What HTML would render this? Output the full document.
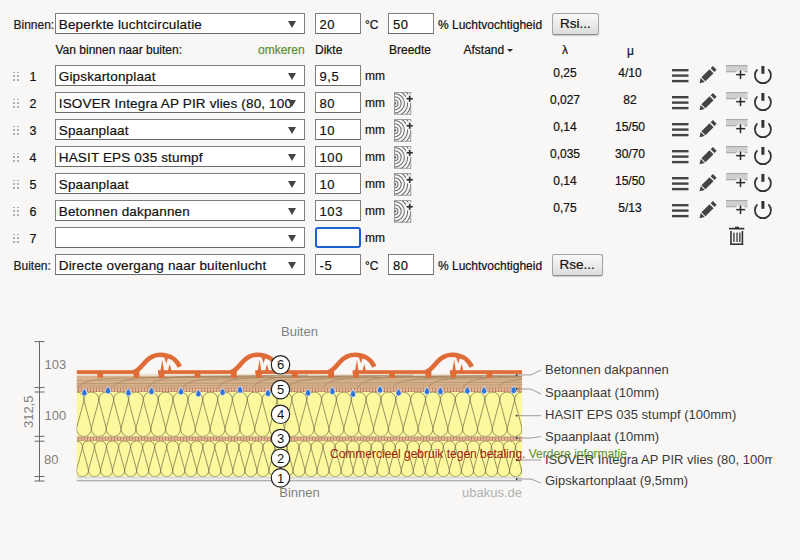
<!DOCTYPE html><html><head><meta charset="utf-8"><style>
*{box-sizing:border-box;margin:0;padding:0}
html,body{width:800px;height:560px;overflow:hidden;background:#f8f7f5;font-family:"Liberation Sans",sans-serif;color:#111;-webkit-text-stroke:0.2px currentColor}
.a{position:absolute;white-space:nowrap}
.t{font-size:12px;line-height:14px}
.sel{position:absolute;left:55px;width:250px;height:21px;background:#fff;border:1px solid #7e7e7e;border-bottom-color:#6a6a6a;font-size:13.5px;line-height:20px;padding-top:0.5px;padding-left:2.8px;letter-spacing:0.15px;overflow:hidden;white-space:nowrap}
.sel .ar{position:absolute;right:8px;top:6.5px;width:0;height:0;border-left:4px solid transparent;border-right:4px solid transparent;border-top:7px solid #444}
.inp{position:absolute;width:46px;height:21px;background:#fff;border:1px solid #7e7e7e;border-bottom-color:#6a6a6a;font-size:13px;line-height:21px;padding-left:4px;letter-spacing:0.6px}
.btn{position:absolute;width:46px;height:22px;border:1px solid #a4a4a4;border-bottom-color:#8c8c8c;border-radius:2.5px;background:linear-gradient(#f9f9f9,#dcdcdc);font-size:13.5px;line-height:20px;text-align:center;box-shadow:0 1px 1px rgba(0,0,0,.18)}
.grip{position:absolute;left:13px;width:6px;height:9px}
.grip i{position:absolute;width:1.8px;height:1.8px;background:#b0b0b0}
.num{position:absolute;left:29px;font-size:12.5px;line-height:14px}
</style></head><body><div class="a t" style="left:13.5px;top:18px;color:#1a1a1a">Binnen:</div>
<div class="sel" style="top:13px">Beperkte luchtcirculatie<span class="ar"></span></div>
<div class="inp" style="left:314.5px;top:13px">20</div>
<div class="a t" style="left:365px;top:17.5px;font-size:12px">°C</div>
<div class="inp" style="left:388px;top:13px">50</div>
<div class="a t" style="left:438px;top:17.5px">% Luchtvochtigheid</div>
<div class="btn" style="left:552px;top:13px;width:46.8px">Rsi...</div>
<div class="a t" style="left:55.5px;top:43px">Van binnen naar buiten:</div>
<div class="a t" style="left:258px;top:43px;color:#5a8f2e">omkeren</div>
<div class="a t" style="left:315px;top:43px">Dikte</div>
<div class="a t" style="left:389px;top:43px">Breedte</div>
<div class="a t" style="left:463.5px;top:43px">Afstand</div>
<div class="a" style="left:507.4px;top:49.4px;width:0;height:0;border-left:3.2px solid transparent;border-right:3.2px solid transparent;border-top:3.4px solid #222"></div>
<div class="a t" style="left:562px;top:43px">λ</div>
<div class="a t" style="left:627px;top:44px">μ</div>
<div class="grip" style="top:71px"><i style="left:0px;top:0.70px"></i><i style="left:4px;top:0.70px"></i><i style="left:0px;top:4.40px"></i><i style="left:4px;top:4.40px"></i><i style="left:0px;top:8.10px"></i><i style="left:4px;top:8.10px"></i></div>
<div class="num" style="top:70px;left:29.6px">1</div>
<div class="sel" style="top:65px">Gipskartonplaat<span class="ar"></span></div>
<div class="inp" style="left:314.5px;top:65px">9,5</div>
<div class="a t" style="left:365px;top:69px">mm</div>
<div class="a t" style="left:535px;width:60px;text-align:center;top:65.8px">0,25</div>
<div class="a t" style="left:600px;width:60px;text-align:center;top:65.8px">4/10</div>
<svg class="a" style="left:672px;top:69px" width="17" height="14" viewBox="0 0 17 14"><g fill="#444"><rect x="0" y="0" width="16.5" height="2.4"/><rect x="0" y="5.4" width="16.5" height="2.4"/><rect x="0" y="10.9" width="16.5" height="2.4"/></g></svg>
<svg class="a" style="left:699px;top:66px" width="18" height="18" viewBox="0 0 18 18"><g transform="translate(0.5,17.2) rotate(-45)" fill="#444"><polygon points="0,0 4.6,-2.9 4.6,2.9"/><rect x="5.6" y="-2.85" width="11.4" height="5.7"/><rect x="18.4" y="-2.6" width="3.2" height="5.2"/></g></svg>
<svg class="a" style="left:726px;top:64.7px" width="23" height="16" viewBox="0 0 23 16"><rect x="0" y="0" width="21.5" height="7.2" fill="#cfcfcf"/><rect x="0" y="0" width="21.5" height="1.1" fill="#a9a9a9"/><rect x="0" y="6.3" width="21.5" height="0.9" fill="#a0a0a0"/><circle cx="14.5" cy="9.9" r="5" fill="#f8f7f5" opacity="0.85"/><rect x="10.2" y="8.9" width="9" height="1.5" fill="#2a2a2a"/><rect x="13.75" y="5.4" width="1.5" height="8.7" fill="#2a2a2a"/></svg>
<svg class="a" style="left:753px;top:65.8px" width="20" height="20" viewBox="0 0 20 20"><path d="M15.36,3.35 A8.0,8.0 0 1 1 4.44,3.35" fill="none" stroke="#333" stroke-width="1.75"/><rect x="8.4" y="0" width="3" height="7.8" fill="#333"/></svg>
<div class="grip" style="top:98px"><i style="left:0px;top:0.70px"></i><i style="left:4px;top:0.70px"></i><i style="left:0px;top:4.40px"></i><i style="left:4px;top:4.40px"></i><i style="left:0px;top:8.10px"></i><i style="left:4px;top:8.10px"></i></div>
<div class="num" style="top:97px;left:29.6px">2</div>
<div class="sel" style="top:92px">ISOVER Integra AP PIR vlies (80, 100<span class="ar"></span></div>
<div class="inp" style="left:314.5px;top:92px">80</div>
<div class="a t" style="left:365px;top:96px">mm</div>
<svg class="a" style="left:394px;top:92px" width="20" height="23" viewBox="0 0 20 23"><defs><clipPath id="cp92"><rect x="0.3" y="0.5" width="16.5" height="22"/></clipPath></defs><g clip-path="url(#cp92)" fill="none" stroke="#6a6a6a" stroke-width="1.05"><circle cx="0.6" cy="11.3" r="1.6" fill="#6a6a6a" stroke="none"/><circle cx="0.6" cy="11.3" r="3.4"/><circle cx="0.6" cy="11.3" r="6.6"/><circle cx="0.6" cy="11.3" r="9.8"/><circle cx="0.6" cy="11.3" r="13.0"/><circle cx="0.6" cy="11.3" r="16.2"/><circle cx="0.6" cy="11.3" r="19.4"/></g><rect x="0.4" y="0.6" width="16.4" height="21.6" fill="none" stroke="#8a8a8a" stroke-width="0.8"/><circle cx="15.6" cy="6.6" r="4.3" fill="#f8f7f5"/><rect x="12.6" y="5.9" width="6.2" height="1.7" fill="#333"/><rect x="14.85" y="3.7" width="1.7" height="6.2" fill="#333"/></svg>
<div class="a t" style="left:535px;width:60px;text-align:center;top:92.8px">0,027</div>
<div class="a t" style="left:600px;width:60px;text-align:center;top:92.8px">82</div>
<svg class="a" style="left:672px;top:96px" width="17" height="14" viewBox="0 0 17 14"><g fill="#444"><rect x="0" y="0" width="16.5" height="2.4"/><rect x="0" y="5.4" width="16.5" height="2.4"/><rect x="0" y="10.9" width="16.5" height="2.4"/></g></svg>
<svg class="a" style="left:699px;top:93px" width="18" height="18" viewBox="0 0 18 18"><g transform="translate(0.5,17.2) rotate(-45)" fill="#444"><polygon points="0,0 4.6,-2.9 4.6,2.9"/><rect x="5.6" y="-2.85" width="11.4" height="5.7"/><rect x="18.4" y="-2.6" width="3.2" height="5.2"/></g></svg>
<svg class="a" style="left:726px;top:91.7px" width="23" height="16" viewBox="0 0 23 16"><rect x="0" y="0" width="21.5" height="7.2" fill="#cfcfcf"/><rect x="0" y="0" width="21.5" height="1.1" fill="#a9a9a9"/><rect x="0" y="6.3" width="21.5" height="0.9" fill="#a0a0a0"/><circle cx="14.5" cy="9.9" r="5" fill="#f8f7f5" opacity="0.85"/><rect x="10.2" y="8.9" width="9" height="1.5" fill="#2a2a2a"/><rect x="13.75" y="5.4" width="1.5" height="8.7" fill="#2a2a2a"/></svg>
<svg class="a" style="left:753px;top:92.8px" width="20" height="20" viewBox="0 0 20 20"><path d="M15.36,3.35 A8.0,8.0 0 1 1 4.44,3.35" fill="none" stroke="#333" stroke-width="1.75"/><rect x="8.4" y="0" width="3" height="7.8" fill="#333"/></svg>
<div class="grip" style="top:125px"><i style="left:0px;top:0.70px"></i><i style="left:4px;top:0.70px"></i><i style="left:0px;top:4.40px"></i><i style="left:4px;top:4.40px"></i><i style="left:0px;top:8.10px"></i><i style="left:4px;top:8.10px"></i></div>
<div class="num" style="top:124px;left:29.6px">3</div>
<div class="sel" style="top:119px">Spaanplaat<span class="ar"></span></div>
<div class="inp" style="left:314.5px;top:119px">10</div>
<div class="a t" style="left:365px;top:123px">mm</div>
<svg class="a" style="left:394px;top:119px" width="20" height="23" viewBox="0 0 20 23"><defs><clipPath id="cp119"><rect x="0.3" y="0.5" width="16.5" height="22"/></clipPath></defs><g clip-path="url(#cp119)" fill="none" stroke="#6a6a6a" stroke-width="1.05"><circle cx="0.6" cy="11.3" r="1.6" fill="#6a6a6a" stroke="none"/><circle cx="0.6" cy="11.3" r="3.4"/><circle cx="0.6" cy="11.3" r="6.6"/><circle cx="0.6" cy="11.3" r="9.8"/><circle cx="0.6" cy="11.3" r="13.0"/><circle cx="0.6" cy="11.3" r="16.2"/><circle cx="0.6" cy="11.3" r="19.4"/></g><rect x="0.4" y="0.6" width="16.4" height="21.6" fill="none" stroke="#8a8a8a" stroke-width="0.8"/><circle cx="15.6" cy="6.6" r="4.3" fill="#f8f7f5"/><rect x="12.6" y="5.9" width="6.2" height="1.7" fill="#333"/><rect x="14.85" y="3.7" width="1.7" height="6.2" fill="#333"/></svg>
<div class="a t" style="left:535px;width:60px;text-align:center;top:119.8px">0,14</div>
<div class="a t" style="left:600px;width:60px;text-align:center;top:119.8px">15/50</div>
<svg class="a" style="left:672px;top:123px" width="17" height="14" viewBox="0 0 17 14"><g fill="#444"><rect x="0" y="0" width="16.5" height="2.4"/><rect x="0" y="5.4" width="16.5" height="2.4"/><rect x="0" y="10.9" width="16.5" height="2.4"/></g></svg>
<svg class="a" style="left:699px;top:120px" width="18" height="18" viewBox="0 0 18 18"><g transform="translate(0.5,17.2) rotate(-45)" fill="#444"><polygon points="0,0 4.6,-2.9 4.6,2.9"/><rect x="5.6" y="-2.85" width="11.4" height="5.7"/><rect x="18.4" y="-2.6" width="3.2" height="5.2"/></g></svg>
<svg class="a" style="left:726px;top:118.7px" width="23" height="16" viewBox="0 0 23 16"><rect x="0" y="0" width="21.5" height="7.2" fill="#cfcfcf"/><rect x="0" y="0" width="21.5" height="1.1" fill="#a9a9a9"/><rect x="0" y="6.3" width="21.5" height="0.9" fill="#a0a0a0"/><circle cx="14.5" cy="9.9" r="5" fill="#f8f7f5" opacity="0.85"/><rect x="10.2" y="8.9" width="9" height="1.5" fill="#2a2a2a"/><rect x="13.75" y="5.4" width="1.5" height="8.7" fill="#2a2a2a"/></svg>
<svg class="a" style="left:753px;top:119.8px" width="20" height="20" viewBox="0 0 20 20"><path d="M15.36,3.35 A8.0,8.0 0 1 1 4.44,3.35" fill="none" stroke="#333" stroke-width="1.75"/><rect x="8.4" y="0" width="3" height="7.8" fill="#333"/></svg>
<div class="grip" style="top:152px"><i style="left:0px;top:0.70px"></i><i style="left:4px;top:0.70px"></i><i style="left:0px;top:4.40px"></i><i style="left:4px;top:4.40px"></i><i style="left:0px;top:8.10px"></i><i style="left:4px;top:8.10px"></i></div>
<div class="num" style="top:151px;left:29.6px">4</div>
<div class="sel" style="top:146px">HASIT EPS 035 stumpf<span class="ar"></span></div>
<div class="inp" style="left:314.5px;top:146px">100</div>
<div class="a t" style="left:365px;top:150px">mm</div>
<svg class="a" style="left:394px;top:146px" width="20" height="23" viewBox="0 0 20 23"><defs><clipPath id="cp146"><rect x="0.3" y="0.5" width="16.5" height="22"/></clipPath></defs><g clip-path="url(#cp146)" fill="none" stroke="#6a6a6a" stroke-width="1.05"><circle cx="0.6" cy="11.3" r="1.6" fill="#6a6a6a" stroke="none"/><circle cx="0.6" cy="11.3" r="3.4"/><circle cx="0.6" cy="11.3" r="6.6"/><circle cx="0.6" cy="11.3" r="9.8"/><circle cx="0.6" cy="11.3" r="13.0"/><circle cx="0.6" cy="11.3" r="16.2"/><circle cx="0.6" cy="11.3" r="19.4"/></g><rect x="0.4" y="0.6" width="16.4" height="21.6" fill="none" stroke="#8a8a8a" stroke-width="0.8"/><circle cx="15.6" cy="6.6" r="4.3" fill="#f8f7f5"/><rect x="12.6" y="5.9" width="6.2" height="1.7" fill="#333"/><rect x="14.85" y="3.7" width="1.7" height="6.2" fill="#333"/></svg>
<div class="a t" style="left:535px;width:60px;text-align:center;top:146.8px">0,035</div>
<div class="a t" style="left:600px;width:60px;text-align:center;top:146.8px">30/70</div>
<svg class="a" style="left:672px;top:150px" width="17" height="14" viewBox="0 0 17 14"><g fill="#444"><rect x="0" y="0" width="16.5" height="2.4"/><rect x="0" y="5.4" width="16.5" height="2.4"/><rect x="0" y="10.9" width="16.5" height="2.4"/></g></svg>
<svg class="a" style="left:699px;top:147px" width="18" height="18" viewBox="0 0 18 18"><g transform="translate(0.5,17.2) rotate(-45)" fill="#444"><polygon points="0,0 4.6,-2.9 4.6,2.9"/><rect x="5.6" y="-2.85" width="11.4" height="5.7"/><rect x="18.4" y="-2.6" width="3.2" height="5.2"/></g></svg>
<svg class="a" style="left:726px;top:145.7px" width="23" height="16" viewBox="0 0 23 16"><rect x="0" y="0" width="21.5" height="7.2" fill="#cfcfcf"/><rect x="0" y="0" width="21.5" height="1.1" fill="#a9a9a9"/><rect x="0" y="6.3" width="21.5" height="0.9" fill="#a0a0a0"/><circle cx="14.5" cy="9.9" r="5" fill="#f8f7f5" opacity="0.85"/><rect x="10.2" y="8.9" width="9" height="1.5" fill="#2a2a2a"/><rect x="13.75" y="5.4" width="1.5" height="8.7" fill="#2a2a2a"/></svg>
<svg class="a" style="left:753px;top:146.8px" width="20" height="20" viewBox="0 0 20 20"><path d="M15.36,3.35 A8.0,8.0 0 1 1 4.44,3.35" fill="none" stroke="#333" stroke-width="1.75"/><rect x="8.4" y="0" width="3" height="7.8" fill="#333"/></svg>
<div class="grip" style="top:179px"><i style="left:0px;top:0.70px"></i><i style="left:4px;top:0.70px"></i><i style="left:0px;top:4.40px"></i><i style="left:4px;top:4.40px"></i><i style="left:0px;top:8.10px"></i><i style="left:4px;top:8.10px"></i></div>
<div class="num" style="top:178px;left:29.6px">5</div>
<div class="sel" style="top:173px">Spaanplaat<span class="ar"></span></div>
<div class="inp" style="left:314.5px;top:173px">10</div>
<div class="a t" style="left:365px;top:177px">mm</div>
<svg class="a" style="left:394px;top:173px" width="20" height="23" viewBox="0 0 20 23"><defs><clipPath id="cp173"><rect x="0.3" y="0.5" width="16.5" height="22"/></clipPath></defs><g clip-path="url(#cp173)" fill="none" stroke="#6a6a6a" stroke-width="1.05"><circle cx="0.6" cy="11.3" r="1.6" fill="#6a6a6a" stroke="none"/><circle cx="0.6" cy="11.3" r="3.4"/><circle cx="0.6" cy="11.3" r="6.6"/><circle cx="0.6" cy="11.3" r="9.8"/><circle cx="0.6" cy="11.3" r="13.0"/><circle cx="0.6" cy="11.3" r="16.2"/><circle cx="0.6" cy="11.3" r="19.4"/></g><rect x="0.4" y="0.6" width="16.4" height="21.6" fill="none" stroke="#8a8a8a" stroke-width="0.8"/><circle cx="15.6" cy="6.6" r="4.3" fill="#f8f7f5"/><rect x="12.6" y="5.9" width="6.2" height="1.7" fill="#333"/><rect x="14.85" y="3.7" width="1.7" height="6.2" fill="#333"/></svg>
<div class="a t" style="left:535px;width:60px;text-align:center;top:173.8px">0,14</div>
<div class="a t" style="left:600px;width:60px;text-align:center;top:173.8px">15/50</div>
<svg class="a" style="left:672px;top:177px" width="17" height="14" viewBox="0 0 17 14"><g fill="#444"><rect x="0" y="0" width="16.5" height="2.4"/><rect x="0" y="5.4" width="16.5" height="2.4"/><rect x="0" y="10.9" width="16.5" height="2.4"/></g></svg>
<svg class="a" style="left:699px;top:174px" width="18" height="18" viewBox="0 0 18 18"><g transform="translate(0.5,17.2) rotate(-45)" fill="#444"><polygon points="0,0 4.6,-2.9 4.6,2.9"/><rect x="5.6" y="-2.85" width="11.4" height="5.7"/><rect x="18.4" y="-2.6" width="3.2" height="5.2"/></g></svg>
<svg class="a" style="left:726px;top:172.7px" width="23" height="16" viewBox="0 0 23 16"><rect x="0" y="0" width="21.5" height="7.2" fill="#cfcfcf"/><rect x="0" y="0" width="21.5" height="1.1" fill="#a9a9a9"/><rect x="0" y="6.3" width="21.5" height="0.9" fill="#a0a0a0"/><circle cx="14.5" cy="9.9" r="5" fill="#f8f7f5" opacity="0.85"/><rect x="10.2" y="8.9" width="9" height="1.5" fill="#2a2a2a"/><rect x="13.75" y="5.4" width="1.5" height="8.7" fill="#2a2a2a"/></svg>
<svg class="a" style="left:753px;top:173.8px" width="20" height="20" viewBox="0 0 20 20"><path d="M15.36,3.35 A8.0,8.0 0 1 1 4.44,3.35" fill="none" stroke="#333" stroke-width="1.75"/><rect x="8.4" y="0" width="3" height="7.8" fill="#333"/></svg>
<div class="grip" style="top:206px"><i style="left:0px;top:0.70px"></i><i style="left:4px;top:0.70px"></i><i style="left:0px;top:4.40px"></i><i style="left:4px;top:4.40px"></i><i style="left:0px;top:8.10px"></i><i style="left:4px;top:8.10px"></i></div>
<div class="num" style="top:205px;left:29.6px">6</div>
<div class="sel" style="top:200px">Betonnen dakpannen<span class="ar"></span></div>
<div class="inp" style="left:314.5px;top:200px">103</div>
<div class="a t" style="left:365px;top:204px">mm</div>
<svg class="a" style="left:394px;top:200px" width="20" height="23" viewBox="0 0 20 23"><defs><clipPath id="cp200"><rect x="0.3" y="0.5" width="16.5" height="22"/></clipPath></defs><g clip-path="url(#cp200)" fill="none" stroke="#6a6a6a" stroke-width="1.05"><circle cx="0.6" cy="11.3" r="1.6" fill="#6a6a6a" stroke="none"/><circle cx="0.6" cy="11.3" r="3.4"/><circle cx="0.6" cy="11.3" r="6.6"/><circle cx="0.6" cy="11.3" r="9.8"/><circle cx="0.6" cy="11.3" r="13.0"/><circle cx="0.6" cy="11.3" r="16.2"/><circle cx="0.6" cy="11.3" r="19.4"/></g><rect x="0.4" y="0.6" width="16.4" height="21.6" fill="none" stroke="#8a8a8a" stroke-width="0.8"/><circle cx="15.6" cy="6.6" r="4.3" fill="#f8f7f5"/><rect x="12.6" y="5.9" width="6.2" height="1.7" fill="#333"/><rect x="14.85" y="3.7" width="1.7" height="6.2" fill="#333"/></svg>
<div class="a t" style="left:535px;width:60px;text-align:center;top:200.8px">0,75</div>
<div class="a t" style="left:600px;width:60px;text-align:center;top:200.8px">5/13</div>
<svg class="a" style="left:672px;top:204px" width="17" height="14" viewBox="0 0 17 14"><g fill="#444"><rect x="0" y="0" width="16.5" height="2.4"/><rect x="0" y="5.4" width="16.5" height="2.4"/><rect x="0" y="10.9" width="16.5" height="2.4"/></g></svg>
<svg class="a" style="left:699px;top:201px" width="18" height="18" viewBox="0 0 18 18"><g transform="translate(0.5,17.2) rotate(-45)" fill="#444"><polygon points="0,0 4.6,-2.9 4.6,2.9"/><rect x="5.6" y="-2.85" width="11.4" height="5.7"/><rect x="18.4" y="-2.6" width="3.2" height="5.2"/></g></svg>
<svg class="a" style="left:726px;top:199.7px" width="23" height="16" viewBox="0 0 23 16"><rect x="0" y="0" width="21.5" height="7.2" fill="#cfcfcf"/><rect x="0" y="0" width="21.5" height="1.1" fill="#a9a9a9"/><rect x="0" y="6.3" width="21.5" height="0.9" fill="#a0a0a0"/><circle cx="14.5" cy="9.9" r="5" fill="#f8f7f5" opacity="0.85"/><rect x="10.2" y="8.9" width="9" height="1.5" fill="#2a2a2a"/><rect x="13.75" y="5.4" width="1.5" height="8.7" fill="#2a2a2a"/></svg>
<svg class="a" style="left:753px;top:200.8px" width="20" height="20" viewBox="0 0 20 20"><path d="M15.36,3.35 A8.0,8.0 0 1 1 4.44,3.35" fill="none" stroke="#333" stroke-width="1.75"/><rect x="8.4" y="0" width="3" height="7.8" fill="#333"/></svg>
<div class="grip" style="top:233px"><i style="left:0px;top:0.70px"></i><i style="left:4px;top:0.70px"></i><i style="left:0px;top:4.40px"></i><i style="left:4px;top:4.40px"></i><i style="left:0px;top:8.10px"></i><i style="left:4px;top:8.10px"></i></div>
<div class="num" style="top:232px;left:29.6px">7</div>
<div class="sel" style="top:227px"><span class="ar"></span></div>
<div class="inp" style="left:314.5px;top:227px;border:2px solid #1b5fd1;border-radius:3px"></div>
<div class="a t" style="left:365px;top:231px">mm</div>
<svg class="a" style="left:729px;top:226px" width="16" height="20" viewBox="0 0 16 20"><g fill="#333"><rect x="0" y="1.8" width="15.3" height="1.7"/><rect x="6" y="0.7" width="4" height="1.5"/><rect x="1.2" y="5" width="1.6" height="14"/><rect x="12.6" y="5" width="1.6" height="14"/><rect x="1.2" y="17.4" width="13" height="1.6"/><rect x="4.3" y="6.6" width="1.3" height="9.4"/><rect x="7.4" y="6.6" width="1.3" height="9.4"/><rect x="10.2" y="6.6" width="1.3" height="9.4"/></g></svg>
<div class="a t" style="left:13.5px;top:259px;color:#1a1a1a">Buiten:</div>
<div class="sel" style="top:254px">Directe overgang naar buitenlucht<span class="ar"></span></div>
<div class="inp" style="left:314.5px;top:254px">-5</div>
<div class="a t" style="left:365px;top:258.5px;font-size:12px">°C</div>
<div class="inp" style="left:388px;top:254px">80</div>
<div class="a t" style="left:438px;top:258.5px">% Luchtvochtigheid</div>
<div class="btn" style="left:552px;top:254px;width:50.5px">Rse...</div>
<svg class="a" style="left:0;top:300px" width="800" height="260" viewBox="0 300 800 260">
<defs>
<clipPath id="clipL"><rect x="540" y="300" width="232.5" height="260"/></clipPath>
<clipPath id="clipD"><rect x="76.5" y="300" width="445.5" height="200"/></clipPath>
<clipPath id="cEPS"><rect x="76.5" y="392" width="445.5" height="44.6"/></clipPath>
<clipPath id="cISO"><rect x="76.5" y="440.9" width="445.5" height="35.8"/></clipPath>
<pattern id="beads" x="0" y="0" width="3" height="10" patternUnits="userSpaceOnUse"><rect x="0" y="0" width="3" height="10" fill="#b98b69"/><rect x="1" y="0" width="2" height="10" fill="#e8b595"/></pattern>
</defs>
<g stroke="#666" stroke-width="1" fill="none">
<line x1="39.5" y1="341.6" x2="39.5" y2="481.0"/>
<line x1="34.5" y1="341.6" x2="44.5" y2="341.6"/>
<line x1="34.5" y1="387.6" x2="44.5" y2="387.6"/>
<line x1="34.5" y1="392.0" x2="44.5" y2="392.0"/>
<line x1="34.5" y1="436.3" x2="44.5" y2="436.3"/>
<line x1="34.5" y1="441.2" x2="44.5" y2="441.2"/>
<line x1="34.5" y1="476.5" x2="44.5" y2="476.5"/>
<line x1="34.5" y1="481.0" x2="44.5" y2="481.0"/>
</g>
<g fill="#7f7f7f" font-family="Liberation Sans" font-size="13">
<text x="44.5" y="369.4">103</text>
<text x="44.5" y="419.6">100</text>
<text x="44" y="464.2">80</text>
<text transform="translate(32.6,411.8) rotate(-90)" text-anchor="middle">312,5</text>
<text x="299.5" y="335.8" text-anchor="middle">Buiten</text>
<text x="299.5" y="497.2" text-anchor="middle">Binnen</text>
<text x="522" y="497.2" text-anchor="end" fill="#b0b0b0">ubakus.de</text>
</g>
<g clip-path="url(#clipD)">
<rect x="76.5" y="373.8" width="445.5" height="2" fill="#eee0d2"/>
<rect x="76.5" y="375.8" width="445.5" height="12" fill="#d8b28b"/>
<g fill="none" stroke="#a08161" stroke-width="0.7">
<path d="M78,387.8 C80,382.5 90,379.2 118,378.2 L238,377.0"/>
<path d="M113,387.8 C115,382.5 125,378.3 153,377.3 L273,376.1"/>
<path d="M148,387.8 C150,382.5 160,377.4 188,376.4 L308,375.2"/>
<path d="M183,387.8 C185,382.5 195,379.2 223,378.2 L343,377.0"/>
<path d="M218,387.8 C220,382.5 230,378.3 258,377.3 L378,376.1"/>
<path d="M253,387.8 C255,382.5 265,377.4 293,376.4 L413,375.2"/>
<path d="M288,387.8 C290,382.5 300,379.2 328,378.2 L448,377.0"/>
<path d="M323,387.8 C325,382.5 335,378.3 363,377.3 L483,376.1"/>
<path d="M358,387.8 C360,382.5 370,377.4 398,376.4 L518,375.2"/>
<path d="M393,387.8 C395,382.5 405,379.2 433,378.2 L553,377.0"/>
<path d="M428,387.8 C430,382.5 440,378.3 468,377.3 L588,376.1"/>
<path d="M463,387.8 C465,382.5 475,377.4 503,376.4 L623,375.2"/>
<path d="M498,387.8 C500,382.5 510,379.2 538,378.2 L658,377.0"/>
<path d="M533,387.8 C535,382.5 545,378.3 573,377.3 L693,376.1"/>
<path d="M40,383.8 L560,382.2" opacity="0.8"/>
<path d="M40,386.2 C200,385.2 300,385.6 560,384.6" opacity="0.6"/>
<path d="M40,380.6 L560,379.4" opacity="0.5"/>
</g>
<rect x="76.5" y="387.6" width="445.5" height="4.4" fill="url(#beads)"/><rect x="76.5" y="387.6" width="445.5" height="0.6" fill="#b98b69"/><rect x="76.5" y="391.4" width="445.5" height="0.6" fill="#b98b69"/>
<rect x="76.5" y="392" width="445.5" height="44.6" fill="#fcf89e"/>
<rect x="76.5" y="436.7" width="445.5" height="4.3" fill="url(#beads)"/><rect x="76.5" y="436.7" width="445.5" height="0.6" fill="#b98b69"/><rect x="76.5" y="440.4" width="445.5" height="0.6" fill="#b98b69"/>
<rect x="76.5" y="440.9" width="445.5" height="35.8" fill="#fcf89e"/>
<rect x="76.5" y="476.7" width="445.5" height="2" fill="#d9d9d9"/>
<rect x="76.5" y="478.7" width="445.5" height="1.4" fill="#eeeeee"/>
<rect x="76.5" y="480.1" width="445.5" height="1.2" fill="#a9a9a9"/>
<g clip-path="url(#cEPS)"><path d="M24.83,401.34 A7.42,7.42 0 1 1 39.17,401.34 L32.25,427.26 A7.42,7.42 0 1 0 46.60,427.26 L39.68,401.34 A7.42,7.42 0 1 1 54.02,401.34 L47.10,427.26 A7.42,7.42 0 1 0 61.45,427.26 L54.53,401.34 A7.42,7.42 0 1 1 68.87,401.34 L61.95,427.26 A7.42,7.42 0 1 0 76.30,427.26 L69.38,401.34 A7.42,7.42 0 1 1 83.72,401.34 L76.80,427.26 A7.42,7.42 0 1 0 91.15,427.26 L84.23,401.34 A7.42,7.42 0 1 1 98.57,401.34 L91.65,427.26 A7.42,7.42 0 1 0 106.00,427.26 L99.08,401.34 A7.42,7.42 0 1 1 113.42,401.34 L106.50,427.26 A7.42,7.42 0 1 0 120.85,427.26 L113.93,401.34 A7.42,7.42 0 1 1 128.27,401.34 L121.35,427.26 A7.42,7.42 0 1 0 135.70,427.26 L128.78,401.34 A7.42,7.42 0 1 1 143.12,401.34 L136.20,427.26 A7.42,7.42 0 1 0 150.55,427.26 L143.63,401.34 A7.42,7.42 0 1 1 157.97,401.34 L151.05,427.26 A7.42,7.42 0 1 0 165.40,427.26 L158.48,401.34 A7.42,7.42 0 1 1 172.82,401.34 L165.90,427.26 A7.42,7.42 0 1 0 180.25,427.26 L173.33,401.34 A7.42,7.42 0 1 1 187.67,401.34 L180.75,427.26 A7.42,7.42 0 1 0 195.10,427.26 L188.18,401.34 A7.42,7.42 0 1 1 202.52,401.34 L195.60,427.26 A7.42,7.42 0 1 0 209.95,427.26 L203.03,401.34 A7.42,7.42 0 1 1 217.37,401.34 L210.45,427.26 A7.42,7.42 0 1 0 224.80,427.26 L217.88,401.34 A7.42,7.42 0 1 1 232.22,401.34 L225.30,427.26 A7.42,7.42 0 1 0 239.65,427.26 L232.73,401.34 A7.42,7.42 0 1 1 247.07,401.34 L240.15,427.26 A7.42,7.42 0 1 0 254.50,427.26 L247.58,401.34 A7.42,7.42 0 1 1 261.92,401.34 L255.00,427.26 A7.42,7.42 0 1 0 269.35,427.26 L262.43,401.34 A7.42,7.42 0 1 1 276.77,401.34 L269.85,427.26 A7.42,7.42 0 1 0 284.20,427.26 L277.28,401.34 A7.42,7.42 0 1 1 291.62,401.34 L284.70,427.26 A7.42,7.42 0 1 0 299.05,427.26 L292.13,401.34 A7.42,7.42 0 1 1 306.47,401.34 L299.55,427.26 A7.42,7.42 0 1 0 313.90,427.26 L306.98,401.34 A7.42,7.42 0 1 1 321.32,401.34 L314.40,427.26 A7.42,7.42 0 1 0 328.75,427.26 L321.83,401.34 A7.42,7.42 0 1 1 336.17,401.34 L329.25,427.26 A7.42,7.42 0 1 0 343.60,427.26 L336.68,401.34 A7.42,7.42 0 1 1 351.02,401.34 L344.10,427.26 A7.42,7.42 0 1 0 358.45,427.26 L351.53,401.34 A7.42,7.42 0 1 1 365.87,401.34 L358.95,427.26 A7.42,7.42 0 1 0 373.30,427.26 L366.38,401.34 A7.42,7.42 0 1 1 380.72,401.34 L373.80,427.26 A7.42,7.42 0 1 0 388.15,427.26 L381.23,401.34 A7.42,7.42 0 1 1 395.57,401.34 L388.65,427.26 A7.42,7.42 0 1 0 403.00,427.26 L396.08,401.34 A7.42,7.42 0 1 1 410.42,401.34 L403.50,427.26 A7.42,7.42 0 1 0 417.85,427.26 L410.93,401.34 A7.42,7.42 0 1 1 425.27,401.34 L418.35,427.26 A7.42,7.42 0 1 0 432.70,427.26 L425.78,401.34 A7.42,7.42 0 1 1 440.12,401.34 L433.20,427.26 A7.42,7.42 0 1 0 447.55,427.26 L440.63,401.34 A7.42,7.42 0 1 1 454.97,401.34 L448.05,427.26 A7.42,7.42 0 1 0 462.40,427.26 L455.48,401.34 A7.42,7.42 0 1 1 469.82,401.34 L462.90,427.26 A7.42,7.42 0 1 0 477.25,427.26 L470.33,401.34 A7.42,7.42 0 1 1 484.67,401.34 L477.75,427.26 A7.42,7.42 0 1 0 492.10,427.26 L485.18,401.34 A7.42,7.42 0 1 1 499.52,401.34 L492.60,427.26 A7.42,7.42 0 1 0 506.95,427.26 L500.03,401.34 A7.42,7.42 0 1 1 514.37,401.34 L507.45,427.26 A7.42,7.42 0 1 0 521.80,427.26 L514.88,401.34 A7.42,7.42 0 1 1 529.22,401.34 L522.30,427.26 A7.42,7.42 0 1 0 536.65,427.26 L529.73,401.34 A7.42,7.42 0 1 1 544.07,401.34 L537.15,427.26 A7.42,7.42 0 1 0 551.50,427.26 L544.58,401.34" fill="none" stroke="#76744e" stroke-width="0.75"/></g>
<g clip-path="url(#cISO)"><path d="M46.60,448.49 A6.01,6.01 0 1 1 58.22,448.49 L52.62,469.11 A6.01,6.01 0 1 0 64.23,469.11 L58.63,448.49 A6.01,6.01 0 1 1 70.25,448.49 L64.65,469.11 A6.01,6.01 0 1 0 76.26,469.11 L70.66,448.49 A6.01,6.01 0 1 1 82.28,448.49 L76.68,469.11 A6.01,6.01 0 1 0 88.29,469.11 L82.69,448.49 A6.01,6.01 0 1 1 94.31,448.49 L88.71,469.11 A6.01,6.01 0 1 0 100.32,469.11 L94.72,448.49 A6.01,6.01 0 1 1 106.34,448.49 L100.74,469.11 A6.01,6.01 0 1 0 112.35,469.11 L106.75,448.49 A6.01,6.01 0 1 1 118.37,448.49 L112.77,469.11 A6.01,6.01 0 1 0 124.38,469.11 L118.78,448.49 A6.01,6.01 0 1 1 130.40,448.49 L124.80,469.11 A6.01,6.01 0 1 0 136.41,469.11 L130.81,448.49 A6.01,6.01 0 1 1 142.43,448.49 L136.83,469.11 A6.01,6.01 0 1 0 148.44,469.11 L142.84,448.49 A6.01,6.01 0 1 1 154.46,448.49 L148.86,469.11 A6.01,6.01 0 1 0 160.47,469.11 L154.87,448.49 A6.01,6.01 0 1 1 166.49,448.49 L160.89,469.11 A6.01,6.01 0 1 0 172.50,469.11 L166.90,448.49 A6.01,6.01 0 1 1 178.52,448.49 L172.92,469.11 A6.01,6.01 0 1 0 184.53,469.11 L178.93,448.49 A6.01,6.01 0 1 1 190.55,448.49 L184.95,469.11 A6.01,6.01 0 1 0 196.56,469.11 L190.96,448.49 A6.01,6.01 0 1 1 202.58,448.49 L196.98,469.11 A6.01,6.01 0 1 0 208.59,469.11 L202.99,448.49 A6.01,6.01 0 1 1 214.61,448.49 L209.01,469.11 A6.01,6.01 0 1 0 220.62,469.11 L215.02,448.49 A6.01,6.01 0 1 1 226.64,448.49 L221.04,469.11 A6.01,6.01 0 1 0 232.65,469.11 L227.05,448.49 A6.01,6.01 0 1 1 238.67,448.49 L233.07,469.11 A6.01,6.01 0 1 0 244.68,469.11 L239.08,448.49 A6.01,6.01 0 1 1 250.70,448.49 L245.10,469.11 A6.01,6.01 0 1 0 256.71,469.11 L251.11,448.49 A6.01,6.01 0 1 1 262.73,448.49 L257.13,469.11 A6.01,6.01 0 1 0 268.74,469.11 L263.14,448.49 A6.01,6.01 0 1 1 274.76,448.49 L269.16,469.11 A6.01,6.01 0 1 0 280.77,469.11 L275.17,448.49 A6.01,6.01 0 1 1 286.79,448.49 L281.19,469.11 A6.01,6.01 0 1 0 292.80,469.11 L287.20,448.49 A6.01,6.01 0 1 1 298.82,448.49 L293.22,469.11 A6.01,6.01 0 1 0 304.83,469.11 L299.23,448.49 A6.01,6.01 0 1 1 310.85,448.49 L305.25,469.11 A6.01,6.01 0 1 0 316.86,469.11 L311.26,448.49 A6.01,6.01 0 1 1 322.88,448.49 L317.28,469.11 A6.01,6.01 0 1 0 328.89,469.11 L323.29,448.49 A6.01,6.01 0 1 1 334.91,448.49 L329.31,469.11 A6.01,6.01 0 1 0 340.92,469.11 L335.32,448.49 A6.01,6.01 0 1 1 346.94,448.49 L341.34,469.11 A6.01,6.01 0 1 0 352.95,469.11 L347.35,448.49 A6.01,6.01 0 1 1 358.97,448.49 L353.37,469.11 A6.01,6.01 0 1 0 364.98,469.11 L359.38,448.49 A6.01,6.01 0 1 1 371.00,448.49 L365.40,469.11 A6.01,6.01 0 1 0 377.01,469.11 L371.41,448.49 A6.01,6.01 0 1 1 383.03,448.49 L377.43,469.11 A6.01,6.01 0 1 0 389.04,469.11 L383.44,448.49 A6.01,6.01 0 1 1 395.06,448.49 L389.46,469.11 A6.01,6.01 0 1 0 401.07,469.11 L395.47,448.49 A6.01,6.01 0 1 1 407.09,448.49 L401.49,469.11 A6.01,6.01 0 1 0 413.10,469.11 L407.50,448.49 A6.01,6.01 0 1 1 419.12,448.49 L413.52,469.11 A6.01,6.01 0 1 0 425.13,469.11 L419.53,448.49 A6.01,6.01 0 1 1 431.15,448.49 L425.55,469.11 A6.01,6.01 0 1 0 437.16,469.11 L431.56,448.49 A6.01,6.01 0 1 1 443.18,448.49 L437.58,469.11 A6.01,6.01 0 1 0 449.19,469.11 L443.59,448.49 A6.01,6.01 0 1 1 455.21,448.49 L449.61,469.11 A6.01,6.01 0 1 0 461.22,469.11 L455.62,448.49 A6.01,6.01 0 1 1 467.24,448.49 L461.64,469.11 A6.01,6.01 0 1 0 473.25,469.11 L467.65,448.49 A6.01,6.01 0 1 1 479.27,448.49 L473.67,469.11 A6.01,6.01 0 1 0 485.28,469.11 L479.68,448.49 A6.01,6.01 0 1 1 491.30,448.49 L485.70,469.11 A6.01,6.01 0 1 0 497.31,469.11 L491.71,448.49 A6.01,6.01 0 1 1 503.33,448.49 L497.73,469.11 A6.01,6.01 0 1 0 509.34,469.11 L503.74,448.49 A6.01,6.01 0 1 1 515.36,448.49 L509.76,469.11 A6.01,6.01 0 1 0 521.37,469.11 L515.77,448.49 A6.01,6.01 0 1 1 527.39,448.49 L521.79,469.11 A6.01,6.01 0 1 0 533.40,469.11 L527.80,448.49 A6.01,6.01 0 1 1 539.42,448.49 L533.82,469.11 A6.01,6.01 0 1 0 545.43,469.11 L539.83,448.49 A6.01,6.01 0 1 1 551.45,448.49 L545.85,469.11 A6.01,6.01 0 1 0 557.46,469.11 L551.86,448.49" fill="none" stroke="#76744e" stroke-width="0.75"/></g>
<rect x="76.5" y="370.2" width="58.0" height="3.7" fill="#df6b36"/>
<rect x="158.0" y="370.2" width="73.80000000000001" height="3.7" fill="#df6b36"/>
<rect x="255.3" y="370.2" width="73.80000000000001" height="3.7" fill="#df6b36"/>
<rect x="352.6" y="370.2" width="73.79999999999995" height="3.7" fill="#df6b36"/>
<rect x="449.9" y="370.2" width="73.80000000000007" height="3.7" fill="#df6b36"/>
<rect x="36.3" y="371" width="5.8" height="6.7" fill="#df6b36"/>
<rect x="61.3" y="371" width="5.8" height="6.7" fill="#df6b36"/>
<rect x="97.3" y="371" width="5.8" height="6.7" fill="#df6b36"/>
<rect x="133.6" y="371" width="5.8" height="6.7" fill="#df6b36"/>
<rect x="158.6" y="371" width="5.8" height="6.7" fill="#df6b36"/>
<rect x="194.6" y="371" width="5.8" height="6.7" fill="#df6b36"/>
<rect x="230.89999999999998" y="371" width="5.8" height="6.7" fill="#df6b36"/>
<rect x="255.89999999999998" y="371" width="5.8" height="6.7" fill="#df6b36"/>
<rect x="291.9" y="371" width="5.8" height="6.7" fill="#df6b36"/>
<rect x="328.2" y="371" width="5.8" height="6.7" fill="#df6b36"/>
<rect x="353.2" y="371" width="5.8" height="6.7" fill="#df6b36"/>
<rect x="389.2" y="371" width="5.8" height="6.7" fill="#df6b36"/>
<rect x="425.5" y="371" width="5.8" height="6.7" fill="#df6b36"/>
<rect x="450.5" y="371" width="5.8" height="6.7" fill="#df6b36"/>
<rect x="486.5" y="371" width="5.8" height="6.7" fill="#df6b36"/>
<rect x="522.8" y="371" width="5.8" height="6.7" fill="#df6b36"/>
<rect x="547.8" y="371" width="5.8" height="6.7" fill="#df6b36"/>
<rect x="583.8" y="371" width="5.8" height="6.7" fill="#df6b36"/>
<rect x="620.1" y="371" width="5.8" height="6.7" fill="#df6b36"/>
<rect x="645.1" y="371" width="5.8" height="6.7" fill="#df6b36"/>
<rect x="681.1" y="371" width="5.8" height="6.7" fill="#df6b36"/>
<path d="M133.5,372.2 C139.0,370.8 141.5,366 146.0,361.2 C151.0,356 155.0,354.7 160.5,354.7 C169.5,354.7 176.5,359.5 179.8,366.8" fill="none" stroke="#df6b36" stroke-width="4.6"/>
<path d="M160.4,371 L162.3,359.4 L164.0,371 Z M163.8,356 L166.3,363.6 L168.6,356 Z M167.9,371 L169.7,364 L171.5,371 Z" fill="#df6b36"/>
<path d="M230.8,372.2 C236.3,370.8 238.8,366 243.3,361.2 C248.3,356 252.3,354.7 257.8,354.7 C266.8,354.7 273.8,359.5 277.1,366.8" fill="none" stroke="#df6b36" stroke-width="4.6"/>
<path d="M257.7,371 L259.6,359.4 L261.3,371 Z M261.1,356 L263.6,363.6 L265.90000000000003,356 Z M265.2,371 L267.0,364 L268.8,371 Z" fill="#df6b36"/>
<path d="M328.1,372.2 C333.6,370.8 336.1,366 340.6,361.2 C345.6,356 349.6,354.7 355.1,354.7 C364.1,354.7 371.1,359.5 374.40000000000003,366.8" fill="none" stroke="#df6b36" stroke-width="4.6"/>
<path d="M355.0,371 L356.90000000000003,359.4 L358.6,371 Z M358.40000000000003,356 L360.90000000000003,363.6 L363.20000000000005,356 Z M362.5,371 L364.3,364 L366.1,371 Z" fill="#df6b36"/>
<path d="M425.4,372.2 C430.9,370.8 433.4,366 437.9,361.2 C442.9,356 446.9,354.7 452.4,354.7 C461.4,354.7 468.4,359.5 471.7,366.8" fill="none" stroke="#df6b36" stroke-width="4.6"/>
<path d="M452.29999999999995,371 L454.2,359.4 L455.9,371 Z M455.7,356 L458.2,363.6 L460.5,356 Z M459.79999999999995,371 L461.59999999999997,364 L463.4,371 Z" fill="#df6b36"/>
</g>
<path d="M84.4,388.5 C85.80000000000001,390.2 87.10000000000001,391.7 87.10000000000001,393.29999999999995 A2.7,2.7 0 0 1 81.7,393.29999999999995 C81.7,391.7 83.0,390.2 84.4,388.5 Z" fill="#2f74d9" stroke="#fff" stroke-width="0.9" stroke-opacity="0.75"/>
<path d="M108,386.5 C109.4,388.2 110.7,389.7 110.7,391.29999999999995 A2.7,2.7 0 0 1 105.3,391.29999999999995 C105.3,389.7 106.6,388.2 108,386.5 Z" fill="#2f74d9" stroke="#fff" stroke-width="0.9" stroke-opacity="0.75"/>
<path d="M128.4,388.5 C129.8,390.2 131.1,391.7 131.1,393.29999999999995 A2.7,2.7 0 0 1 125.7,393.29999999999995 C125.7,391.7 127.0,390.2 128.4,388.5 Z" fill="#2f74d9" stroke="#fff" stroke-width="0.9" stroke-opacity="0.75"/>
<path d="M151.4,387.1 C152.8,388.8 154.1,390.3 154.1,391.9 A2.7,2.7 0 0 1 148.70000000000002,391.9 C148.70000000000002,390.3 150.0,388.8 151.4,387.1 Z" fill="#2f74d9" stroke="#fff" stroke-width="0.9" stroke-opacity="0.75"/>
<path d="M181,387.5 C182.4,389.2 183.7,390.7 183.7,392.29999999999995 A2.7,2.7 0 0 1 178.3,392.29999999999995 C178.3,390.7 179.6,389.2 181,387.5 Z" fill="#2f74d9" stroke="#fff" stroke-width="0.9" stroke-opacity="0.75"/>
<path d="M198.4,389.5 C199.8,391.2 201.1,392.7 201.1,394.29999999999995 A2.7,2.7 0 0 1 195.70000000000002,394.29999999999995 C195.70000000000002,392.7 197.0,391.2 198.4,389.5 Z" fill="#2f74d9" stroke="#fff" stroke-width="0.9" stroke-opacity="0.75"/>
<path d="M222.6,387.90000000000003 C224.0,389.6 225.29999999999998,391.1 225.29999999999998,392.7 A2.7,2.7 0 0 1 219.9,392.7 C219.9,391.1 221.2,389.6 222.6,387.90000000000003 Z" fill="#2f74d9" stroke="#fff" stroke-width="0.9" stroke-opacity="0.75"/>
<path d="M240,385.70000000000005 C241.4,387.40000000000003 242.7,388.90000000000003 242.7,390.5 A2.7,2.7 0 0 1 237.3,390.5 C237.3,388.90000000000003 238.6,387.40000000000003 240,385.70000000000005 Z" fill="#2f74d9" stroke="#fff" stroke-width="0.9" stroke-opacity="0.75"/>
<path d="M268,389.1 C269.4,390.8 270.7,392.3 270.7,393.9 A2.7,2.7 0 0 1 265.3,393.9 C265.3,392.3 266.6,390.8 268,389.1 Z" fill="#2f74d9" stroke="#fff" stroke-width="0.9" stroke-opacity="0.75"/>
<path d="M308,388.70000000000005 C309.4,390.40000000000003 310.7,391.90000000000003 310.7,393.5 A2.7,2.7 0 0 1 305.3,393.5 C305.3,391.90000000000003 306.6,390.40000000000003 308,388.70000000000005 Z" fill="#2f74d9" stroke="#fff" stroke-width="0.9" stroke-opacity="0.75"/>
<path d="M332.4,387.1 C333.79999999999995,388.8 335.09999999999997,390.3 335.09999999999997,391.9 A2.7,2.7 0 0 1 329.7,391.9 C329.7,390.3 331.0,388.8 332.4,387.1 Z" fill="#2f74d9" stroke="#fff" stroke-width="0.9" stroke-opacity="0.75"/>
<path d="M353,389.70000000000005 C354.4,391.40000000000003 355.7,392.90000000000003 355.7,394.5 A2.7,2.7 0 0 1 350.3,394.5 C350.3,392.90000000000003 351.6,391.40000000000003 353,389.70000000000005 Z" fill="#2f74d9" stroke="#fff" stroke-width="0.9" stroke-opacity="0.75"/>
<path d="M380,385.70000000000005 C381.4,387.40000000000003 382.7,388.90000000000003 382.7,390.5 A2.7,2.7 0 0 1 377.3,390.5 C377.3,388.90000000000003 378.6,387.40000000000003 380,385.70000000000005 Z" fill="#2f74d9" stroke="#fff" stroke-width="0.9" stroke-opacity="0.75"/>
<path d="M398.6,388.5 C400.0,390.2 401.3,391.7 401.3,393.29999999999995 A2.7,2.7 0 0 1 395.90000000000003,393.29999999999995 C395.90000000000003,391.7 397.20000000000005,390.2 398.6,388.5 Z" fill="#2f74d9" stroke="#fff" stroke-width="0.9" stroke-opacity="0.75"/>
<path d="M427,387.1 C428.4,388.8 429.7,390.3 429.7,391.9 A2.7,2.7 0 0 1 424.3,391.9 C424.3,390.3 425.6,388.8 427,387.1 Z" fill="#2f74d9" stroke="#fff" stroke-width="0.9" stroke-opacity="0.75"/>
<path d="M440.4,387.1 C441.79999999999995,388.8 443.09999999999997,390.3 443.09999999999997,391.9 A2.7,2.7 0 0 1 437.7,391.9 C437.7,390.3 439.0,388.8 440.4,387.1 Z" fill="#2f74d9" stroke="#fff" stroke-width="0.9" stroke-opacity="0.75"/>
<path d="M467.4,386.5 C468.79999999999995,388.2 470.09999999999997,389.7 470.09999999999997,391.29999999999995 A2.7,2.7 0 0 1 464.7,391.29999999999995 C464.7,389.7 466.0,388.2 467.4,386.5 Z" fill="#2f74d9" stroke="#fff" stroke-width="0.9" stroke-opacity="0.75"/>
<path d="M484,386.5 C485.4,388.2 486.7,389.7 486.7,391.29999999999995 A2.7,2.7 0 0 1 481.3,391.29999999999995 C481.3,389.7 482.6,388.2 484,386.5 Z" fill="#2f74d9" stroke="#fff" stroke-width="0.9" stroke-opacity="0.75"/>
<path d="M513.6,386.1 C515.0,387.8 516.3000000000001,389.3 516.3000000000001,390.9 A2.7,2.7 0 0 1 510.90000000000003,390.9 C510.90000000000003,389.3 512.2,387.8 513.6,386.1 Z" fill="#2f74d9" stroke="#fff" stroke-width="0.9" stroke-opacity="0.75"/>
<g stroke="#8a8a8a" stroke-width="0.85" fill="none">
<path d="M516.6,374.9 L531,374.9 L541,370"/>
<path d="M516.6,389 L531,389 L541,394"/>
<path d="M516.6,415.7 L541,415.7"/>
<path d="M516.6,438 L531,438 L541,436.6"/>
<path d="M516.6,460 L541,460"/>
<path d="M516.6,479 L531,479 L541,483"/>
</g>
<g fill="#333">
<circle cx="516.6" cy="374.9" r="0.9"/>
<circle cx="516.6" cy="389" r="0.9"/>
<circle cx="516.6" cy="415.7" r="0.9"/>
<circle cx="516.6" cy="438" r="0.9"/>
<circle cx="516.6" cy="460" r="0.9"/>
<circle cx="516.6" cy="479" r="0.9"/>
</g>
<circle cx="280.5" cy="364.8" r="9.2" fill="#fff" stroke="#222" stroke-width="1.2"/>
<text x="280.5" y="369.40000000000003" text-anchor="middle" font-family="Liberation Sans" font-size="13" fill="#111">6</text>
<circle cx="280.5" cy="389.6" r="9.2" fill="#fff" stroke="#222" stroke-width="1.2"/>
<text x="280.5" y="394.20000000000005" text-anchor="middle" font-family="Liberation Sans" font-size="13" fill="#111">5</text>
<circle cx="280.5" cy="414.3" r="9.2" fill="#fff" stroke="#222" stroke-width="1.2"/>
<text x="280.5" y="418.90000000000003" text-anchor="middle" font-family="Liberation Sans" font-size="13" fill="#111">4</text>
<circle cx="280.5" cy="438.5" r="9.2" fill="#fff" stroke="#222" stroke-width="1.2"/>
<text x="280.5" y="443.1" text-anchor="middle" font-family="Liberation Sans" font-size="13" fill="#111">3</text>
<circle cx="280.5" cy="458.2" r="9.2" fill="#fff" stroke="#222" stroke-width="1.2"/>
<text x="280.5" y="462.8" text-anchor="middle" font-family="Liberation Sans" font-size="13" fill="#111">2</text>
<circle cx="280.5" cy="477.9" r="9.2" fill="#fff" stroke="#222" stroke-width="1.2"/>
<text x="280.5" y="482.5" text-anchor="middle" font-family="Liberation Sans" font-size="13" fill="#111">1</text>
<g font-family="Liberation Sans" font-size="13" fill="#3a3a3a" clip-path="url(#clipL)">
<text x="545" y="374.4">Betonnen dakpannen</text>
<text x="545" y="396.8">Spaanplaat (10mm)</text>
<text x="545" y="419.2">HASIT EPS 035 stumpf (100mm)</text>
<text x="545" y="441">Spaanplaat (10mm)</text>
<text x="545" y="463.6">ISOVER Integra AP PIR vlies (80, 100mm)</text>
<text x="545" y="485.2">Gipskartonplaat (9,5mm)</text>
</g>
<text x="330" y="457.9" font-family="Liberation Sans" font-size="12" fill="#9e1b0f">Commercieel gebruik tegen betaling. <tspan fill="#5b8f2b">Verdere informatie</tspan></text>
</svg></body></html>
